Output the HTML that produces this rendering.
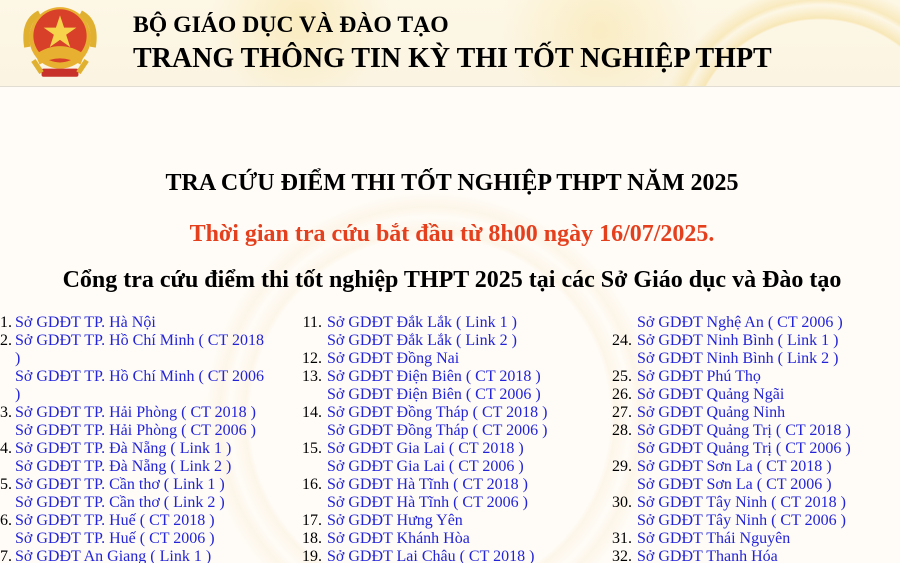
<!DOCTYPE html>
<html><head><meta charset="utf-8"><style>
html,body{margin:0;padding:0;width:900px;height:563px;overflow:hidden;}
body{background:#fffcf7;font-family:"Liberation Serif",serif;position:relative;}
.hdr{position:absolute;left:0;top:0;width:900px;height:86px;border-bottom:1px solid #e2ddd2;
background:
radial-gradient(circle at 820px 150px,transparent 130px,rgba(240,205,100,.35) 132px,transparent 145px,rgba(240,205,100,.3) 150px,transparent 165px),
radial-gradient(circle at 300px 20px,rgba(245,215,120,.35),transparent 90px),
radial-gradient(circle at 600px 30px,rgba(245,215,120,.3),transparent 100px),
linear-gradient(#fdf7e6,#fbf4e2);}
.bgpat{position:absolute;left:0;top:87px;width:900px;height:476px;
background:radial-gradient(circle at 430px 330px,transparent 180px,rgba(245,225,190,.25) 185px,transparent 200px,rgba(245,225,190,.25) 210px,transparent 225px);}
.t1{position:absolute;left:133px;top:12px;font-size:23.7px;font-weight:bold;white-space:nowrap;}
.t2{position:absolute;left:133px;top:43px;font-size:28px;font-weight:bold;white-space:nowrap;}
.h{position:absolute;left:0;width:900px;text-align:center;font-weight:bold;white-space:nowrap;}
.col{position:absolute;top:314px;font-size:16px;line-height:18px;color:#2323d8;}
.r{position:relative;height:18px;white-space:nowrap;}
.n{position:absolute;color:#000;text-align:right;}
</style></head><body>
<div class="hdr">
<svg style="position:absolute;left:18px;top:1px" width="84" height="84" viewBox="0 0 80 82">
<path d="M8 45 Q4 20 20 12" stroke="#e0b030" stroke-width="6" fill="none"/>
<path d="M72 45 Q76 20 60 12" stroke="#e0b030" stroke-width="6" fill="none"/>
<circle cx="40" cy="36" r="30" fill="#e8b030"/>
<circle cx="40" cy="34" r="26" fill="#d8402a"/>
<polygon points="40,14 44,26 56,26 46,33 50,45 40,38 30,45 34,33 24,26 36,26" fill="#f6d34a"/>
<path d="M16 52 Q40 36 64 52 L60 62 Q40 50 20 62Z" fill="#e8b030"/>
<rect x="22" y="66" width="36" height="8" rx="2" fill="#c8302a"/>
<path d="M14 58 L22 70 M66 58 L58 70" stroke="#e0b030" stroke-width="5"/>
</svg>
<div class="t1">BỘ GIÁO DỤC VÀ ĐÀO TẠO</div>
<div class="t2">TRANG THÔNG TIN KỲ THI TỐT NGHIỆP THPT</div>
</div>
<div class="bgpat"></div>
<div class="h" style="top:170px;font-size:24px;left:2px">TRA CỨU ĐIỂM THI TỐT NGHIỆP THPT NĂM 2025</div>
<div class="h" style="top:221px;font-size:24px;color:#e5401e;left:2px">Thời gian tra cứu bắt đầu từ 8h00 ngày 16/07/2025.</div>
<div class="h" style="top:267px;font-size:24px;left:2px">Cổng tra cứu điểm thi tốt nghiệp THPT 2025 tại các Sở Giáo dục và Đào tạo</div>

<div class="col" style="left:15px">
<div class="r"><span class="n" style="left:-15px;width:12px">1.</span>Sở GDĐT TP. Hà Nội</div>
<div class="r"><span class="n" style="left:-15px;width:12px">2.</span>Sở GDĐT TP. Hồ Chí Minh ( CT 2018</div>
<div class="r">)</div>
<div class="r">Sở GDĐT TP. Hồ Chí Minh ( CT 2006</div>
<div class="r">)</div>
<div class="r"><span class="n" style="left:-15px;width:12px">3.</span>Sở GDĐT TP. Hải Phòng ( CT 2018 )</div>
<div class="r">Sở GDĐT TP. Hải Phòng ( CT 2006 )</div>
<div class="r"><span class="n" style="left:-15px;width:12px">4.</span>Sở GDĐT TP. Đà Nẵng ( Link 1 )</div>
<div class="r">Sở GDĐT TP. Đà Nẵng ( Link 2 )</div>
<div class="r"><span class="n" style="left:-15px;width:12px">5.</span>Sở GDĐT TP. Cần thơ ( Link 1 )</div>
<div class="r">Sở GDĐT TP. Cần thơ ( Link 2 )</div>
<div class="r"><span class="n" style="left:-15px;width:12px">6.</span>Sở GDĐT TP. Huế ( CT 2018 )</div>
<div class="r">Sở GDĐT TP. Huế ( CT 2006 )</div>
<div class="r"><span class="n" style="left:-15px;width:12px">7.</span>Sở GDĐT An Giang ( Link 1 )</div>
</div>

<div class="col" style="left:327px">
<div class="r"><span class="n" style="left:-25px;width:20px">11.</span>Sở GDĐT Đắk Lắk ( Link 1 )</div>
<div class="r">Sở GDĐT Đắk Lắk ( Link 2 )</div>
<div class="r"><span class="n" style="left:-25px;width:20px">12.</span>Sở GDĐT Đồng Nai</div>
<div class="r"><span class="n" style="left:-25px;width:20px">13.</span>Sở GDĐT Điện Biên ( CT 2018 )</div>
<div class="r">Sở GDĐT Điện Biên ( CT 2006 )</div>
<div class="r"><span class="n" style="left:-25px;width:20px">14.</span>Sở GDĐT Đồng Tháp ( CT 2018 )</div>
<div class="r">Sở GDĐT Đồng Tháp ( CT 2006 )</div>
<div class="r"><span class="n" style="left:-25px;width:20px">15.</span>Sở GDĐT Gia Lai ( CT 2018 )</div>
<div class="r">Sở GDĐT Gia Lai ( CT 2006 )</div>
<div class="r"><span class="n" style="left:-25px;width:20px">16.</span>Sở GDĐT Hà Tĩnh ( CT 2018 )</div>
<div class="r">Sở GDĐT Hà Tĩnh ( CT 2006 )</div>
<div class="r"><span class="n" style="left:-25px;width:20px">17.</span>Sở GDĐT Hưng Yên</div>
<div class="r"><span class="n" style="left:-25px;width:20px">18.</span>Sở GDĐT Khánh Hòa</div>
<div class="r"><span class="n" style="left:-25px;width:20px">19.</span>Sở GDĐT Lai Châu ( CT 2018 )</div>
</div>

<div class="col" style="left:637px">
<div class="r">Sở GDĐT Nghệ An ( CT 2006 )</div>
<div class="r"><span class="n" style="left:-25px;width:20px">24.</span>Sở GDĐT Ninh Bình ( Link 1 )</div>
<div class="r">Sở GDĐT Ninh Bình ( Link 2 )</div>
<div class="r"><span class="n" style="left:-25px;width:20px">25.</span>Sở GDĐT Phú Thọ</div>
<div class="r"><span class="n" style="left:-25px;width:20px">26.</span>Sở GDĐT Quảng Ngãi</div>
<div class="r"><span class="n" style="left:-25px;width:20px">27.</span>Sở GDĐT Quảng Ninh</div>
<div class="r"><span class="n" style="left:-25px;width:20px">28.</span>Sở GDĐT Quảng Trị ( CT 2018 )</div>
<div class="r">Sở GDĐT Quảng Trị ( CT 2006 )</div>
<div class="r"><span class="n" style="left:-25px;width:20px">29.</span>Sở GDĐT Sơn La ( CT 2018 )</div>
<div class="r">Sở GDĐT Sơn La ( CT 2006 )</div>
<div class="r"><span class="n" style="left:-25px;width:20px">30.</span>Sở GDĐT Tây Ninh ( CT 2018 )</div>
<div class="r">Sở GDĐT Tây Ninh ( CT 2006 )</div>
<div class="r"><span class="n" style="left:-25px;width:20px">31.</span>Sở GDĐT Thái Nguyên</div>
<div class="r"><span class="n" style="left:-25px;width:20px">32.</span>Sở GDĐT Thanh Hóa</div>
</div>
</body></html>
